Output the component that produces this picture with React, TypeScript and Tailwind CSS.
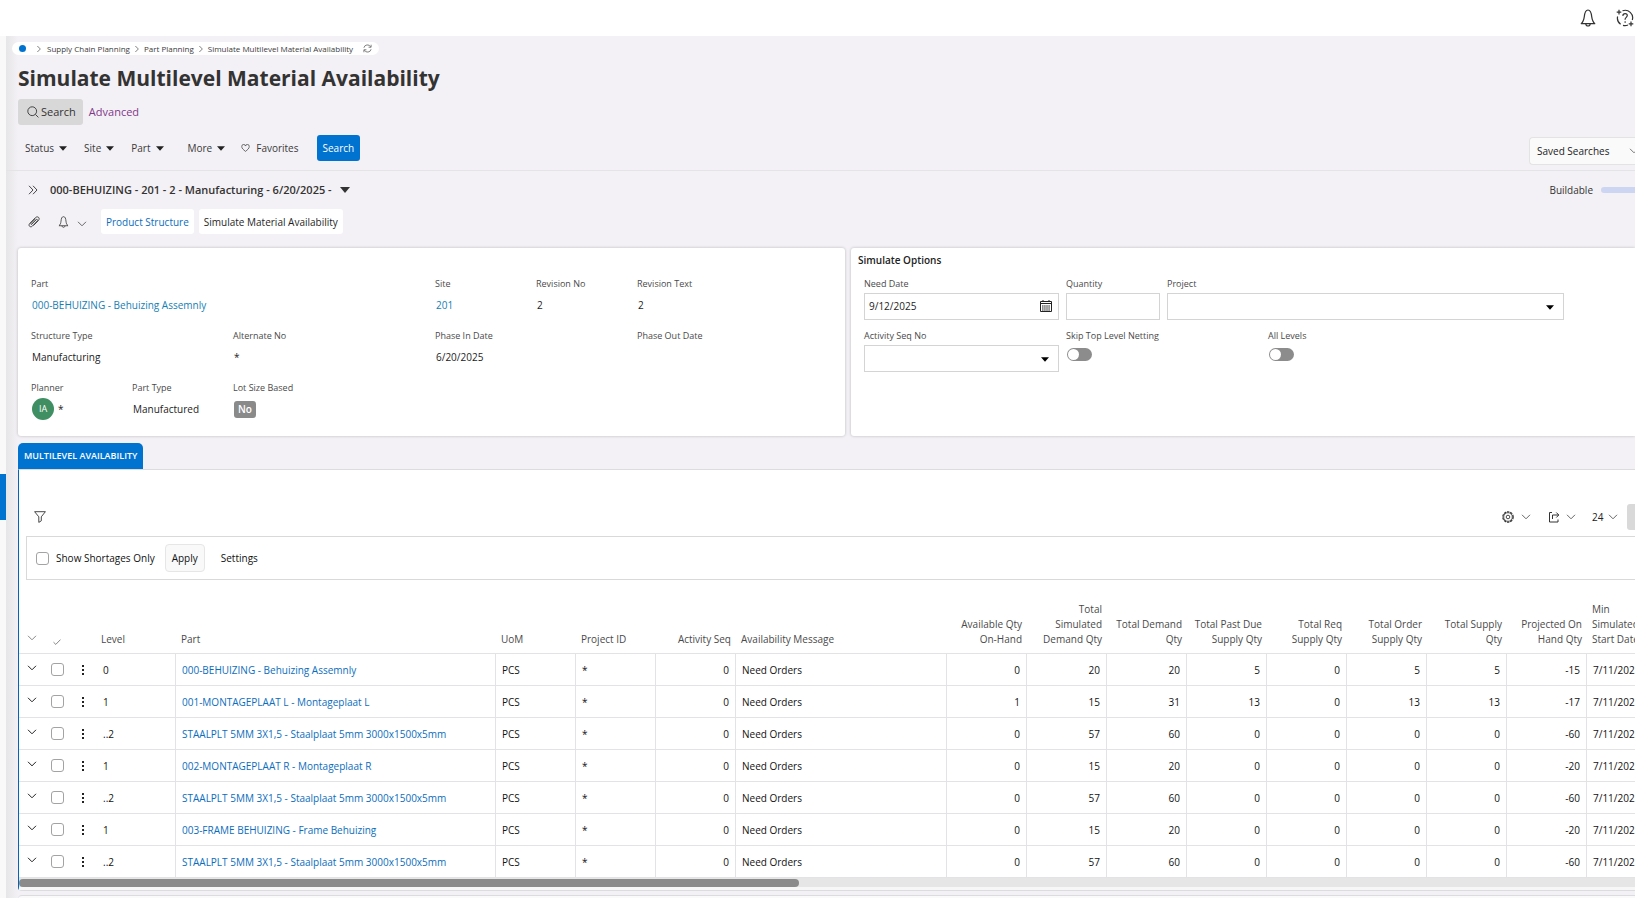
import React from 'react'
import clsx from 'clsx'

type IconProps = { className?: string }

const rows = [
  { level: '0', part: '000-BEHUIZING - Behuizing Assemnly', qty: [0, 20, 20, 5, 0, 5, 5, -15] },
  { level: '1', part: '001-MONTAGEPLAAT L - Montageplaat L', qty: [1, 15, 31, 13, 0, 13, 13, -17] },
  { level: '..2', part: 'STAALPLT 5MM 3X1,5 - Staalplaat 5mm 3000x1500x5mm', qty: [0, 57, 60, 0, 0, 0, 0, -60] },
  { level: '1', part: '002-MONTAGEPLAAT R - Montageplaat R', qty: [0, 15, 20, 0, 0, 0, 0, -20] },
  { level: '..2', part: 'STAALPLT 5MM 3X1,5 - Staalplaat 5mm 3000x1500x5mm', qty: [0, 57, 60, 0, 0, 0, 0, -60] },
  { level: '1', part: '003-FRAME BEHUIZING - Frame Behuizing', qty: [0, 15, 20, 0, 0, 0, 0, -20] },
  { level: '..2', part: 'STAALPLT 5MM 3X1,5 - Staalplaat 5mm 3000x1500x5mm', qty: [0, 57, 60, 0, 0, 0, 0, -60] },
]

const qtyHeaders = [
  'Available Qty\nOn-Hand',
  'Total\nSimulated\nDemand Qty',
  'Total Demand\nQty',
  'Total Past Due\nSupply Qty',
  'Total Req\nSupply Qty',
  'Total Order\nSupply Qty',
  'Total Supply\nQty',
  'Projected On\nHand Qty',
]

function Chevron({ className }: IconProps) {
  return (
    <svg viewBox="0 0 10 6" fill="none" stroke="currentColor" className={clsx('h-[6px] w-[10px] shrink-0', className)}>
      <path d="M1 .8 5 4.8 9 .8" />
    </svg>
  )
}

function Caret({ className }: IconProps) {
  return (
    <svg viewBox="0 0 8 5" fill="currentColor" className={clsx('h-[5px] w-2 shrink-0', className)}>
      <path d="M0 .3h8L4 4.8z" />
    </svg>
  )
}

function BellIcon({ className }: IconProps) {
  return (
    <svg viewBox="0 0 16 18" fill="none" stroke="currentColor" strokeWidth="1.2" strokeLinejoin="round" className={className}>
      <path d="M1.2 14.600c2.200-1.800 2.600-3.400 3.100-7C4.700 3.800 5.400 1 8 1s3.300 2.800 3.700 6.600c.5 3.600.9 5.200 3.100 7z" />
      <path d="M5.800 14.800c.2 1.500 1 2.200 2.200 2.200s2-.7 2.200-2.200" />
    </svg>
  )
}

function HelpIcon() {
  return (
    <svg viewBox="0 0 18 18" fill="none" stroke="currentColor" strokeWidth="1.2" className="h-[18px] w-[18px]">
      <path d="M6.500 1.800A7.500 7.500 0 0 1 16.300 11M12 16a7.500 7.500 0 0 1-5 .4M4.600 15.200A7.500 7.500 0 0 1 1.600 7.500" />
      <path d="M3 .8v4.600M.7 3.100h4.600M15 12.600v4.600M12.700 14.900h4.600" />
      <path d="M6.800 6.900c.1-1.500 1-2.300 2.300-2.300s2.200.8 2.200 2c0 1.700-2.200 1.800-2.200 3.700v.5" />
      <circle cx="9.100" cy="13" r=".5" fill="currentColor" strokeWidth=".5" />
    </svg>
  )
}

function RefreshIcon() {
  return (
    <svg viewBox="0 0 10 10" fill="none" stroke="#666" strokeWidth=".9" className="h-[9px] w-[9px]">
      <path d="M1 4.200A4 4 0 0 1 8.500 3.200M9 5.800A4 4 0 0 1 1.500 6.800" />
      <path d="M9 .8v2.800H6.200M1 9.200V6.400h2.800" />
    </svg>
  )
}

function SearchIcon() {
  return (
    <svg viewBox="0 0 12 12" fill="none" stroke="currentColor" strokeWidth=".9" className="h-3 w-3">
      <circle cx="5.200" cy="5.200" r="4.400" />
      <path d="m8.400 8.400 3 3" />
    </svg>
  )
}

function HeartIcon() {
  return (
    <svg viewBox="0 0 10 9" fill="none" stroke="currentColor" strokeWidth=".8" className="h-2 w-[9px]">
      <path d="M5 8.300C2.500 6.300.8 4.900.8 3A2.100 2.100 0 0 1 5 2.300 2.100 2.100 0 0 1 9.200 3C9.200 4.900 7.500 6.300 5 8.300z" />
    </svg>
  )
}

function ClipIcon() {
  return (
    <svg viewBox="0 0 12 12" fill="none" stroke="currentColor" strokeWidth="1" strokeLinecap="round" className="h-3 w-3">
      <path d="M3.300 8.600 8.200 3.700c.8-.8 2 .3 1.200 1.200l-5 5.200c-2 1.900-4.600-.5-2.700-2.600l5.800-5.900c2.300-2 4.900.5 3 2.800L5.800 9.200" />
      <path d="M2.700 7.700 7.300 3" />
    </svg>
  )
}

function CalendarIcon() {
  return (
    <svg viewBox="0 0 12 12" fill="none" stroke="#222" className="h-3 w-3">
      <path d="M.5 1.500h11v10H.5zM.5 3.500h11" />
      <path d="M3 0v2M9 0v2" />
      <path d="M2 6h8M2 8h8M2 10h8" strokeWidth="1.200" strokeDasharray="1.600 .5" />
    </svg>
  )
}

function FunnelIcon() {
  return (
    <svg viewBox="0 0 12 12" fill="none" stroke="#333" strokeWidth=".9" strokeLinejoin="round" className="h-3 w-3">
      <path d="M.6.7h10.800L7.300 5.800v4L4.800 11.400V5.800z" />
    </svg>
  )
}

function GearIcon() {
  return (
    <svg viewBox="0 0 12 12" fill="none" stroke="#333" className="h-3 w-3">
      <circle cx="6" cy="6" r="5.200" strokeWidth="1.200" strokeDasharray="2.400 .87" />
      <circle cx="6" cy="6" r="4.300" strokeWidth=".8" />
      <circle cx="6" cy="6" r="1.800" strokeWidth=".9" />
    </svg>
  )
}

function ShareIcon() {
  return (
    <svg viewBox="0 0 12 12" fill="none" stroke="#333" className="h-3 w-3">
      <path d="M4 1.500H1.500v9.500h8.500V8.500" />
      <path d="M4.500 8V4h6M8.300 1.500 10.800 4 8.300 6.500" />
    </svg>
  )
}

function Field({ label, className, children }: { label: string; className?: string; children?: React.ReactNode }) {
  return (
    <div className={clsx('flex h-11 flex-col', className)}>
      <span className="h-[17px] text-[9px] leading-4 whitespace-nowrap text-[#4a4a4a]">{label}</span>
      <div className="flex h-6 items-center gap-1 pl-px whitespace-nowrap">{children}</div>
    </div>
  )
}

function Control({ id, label, className, children }: { id: string; label: string; className?: string; children: React.ReactNode }) {
  return (
    <div className={clsx('flex h-11 flex-col items-start', className)}>
      <label htmlFor={id} className="h-[17px] text-[9px] leading-4 whitespace-nowrap text-[#4a4a4a]">{label}</label>
      {children}
    </div>
  )
}

function SelectBox({ id }: { id: string }) {
  return (
    <div className="relative w-full">
      <select id={id} className="block h-[27px] w-full appearance-none border border-[#d4d4d4] bg-white px-1">
        <option></option>
      </select>
      <Caret className="pointer-events-none absolute top-3 right-[10px] text-black" />
    </div>
  )
}

function Toggle({ id }: { id: string }) {
  return (
    <input
      id={id}
      type="checkbox"
      role="switch"
      className="mt-[3px] ml-px h-[13px] w-[25px] appearance-none rounded-full bg-[#8c8c8c] p-px before:block before:h-[11px] before:w-[11px] before:rounded-full before:bg-white checked:before:ml-3"
    />
  )
}

function CheckBox({ id, label }: { id?: string; label?: string }) {
  return (
    <input
      id={id}
      type="checkbox"
      aria-label={label}
      className="block h-[13px] w-[13px] shrink-0 appearance-none rounded-[3px] border border-[#a3a3a3] bg-white checked:bg-[#0073d1]"
    />
  )
}

function FilterButton({ children, className }: { children: React.ReactNode; className?: string }) {
  return (
    <button className={clsx('flex items-center gap-[5px]', className)}>
      {children}
      <Caret className="text-[#222]" />
    </button>
  )
}

function SearchHeader() {
  return (
    <header className="border-b border-[#e4e3e6] pb-[5px] pl-3">
      <nav aria-label="Breadcrumb" className="-ml-[6px] flex h-[13px] w-fit items-center rounded-full bg-white px-[7px] text-[8px] text-[#3c3c3c]">
        <span className="mr-2 h-[7px] w-[7px] rounded-full bg-[#0073d1]" />
        <Chevron className="-rotate-90 scale-75 text-[#555]" />
        <a href="#" className="ml-[3px]">Supply Chain Planning</a>
        <Chevron className="mx-[2px] -rotate-90 scale-75 text-[#555]" />
        <a href="#">Part Planning</a>
        <Chevron className="mx-[2px] -rotate-90 scale-75 text-[#555]" />
        <a href="#">Simulate Multilevel Material Availability</a>
        <button aria-label="Refresh" className="ml-[10px]"><RefreshIcon /></button>
      </nav>
      <h1 className="mt-[7px] text-[21px] leading-8 font-bold text-[#333]">Simulate Multilevel Material Availability</h1>
      <div className="mt-[5px] flex items-center gap-[6px] text-[11px]">
        <button className="flex h-[26px] items-center gap-[2px] rounded-[3px] bg-[#d9d8d9] pr-[7px] pl-[9px] text-[#333]">
          <SearchIcon />
          Search
        </button>
        <a href="#" className="text-[#81388b]">Advanced</a>
      </div>
      <div className="mt-[10px] flex h-[30px] items-start justify-between">
        <div className="flex h-[26px] items-center pl-[7px] text-[#3a3a3a]">
          <FilterButton className="mr-[17px]">Status</FilterButton>
          <FilterButton className="mr-[17px]">Site</FilterButton>
          <FilterButton className="mr-6">Part</FilterButton>
          <FilterButton className="mr-4">More</FilterButton>
          <button className="mr-[18px] flex items-center gap-[6px]">
            <HeartIcon />
            Favorites
          </button>
          <button className="h-[26px] rounded-[3px] bg-[#0073d1] px-[6px] font-medium text-white">Search</button>
        </div>
        <div className="relative w-[106px] self-end">
          <select aria-label="Saved Searches" className="block h-7 w-full appearance-none rounded-l-[4px] border border-r-0 border-[#e3e3e3] bg-[#fafafa] pl-[7px] text-[#222]">
            <option>Saved Searches</option>
          </select>
          <Chevron className="pointer-events-none absolute top-[11px] -right-1 text-[#777]" />
        </div>
      </div>
    </header>
  )
}

function RecordBar() {
  return (
    <div className="pl-3">
      <div className="flex h-[38px] items-center">
        <button aria-label="Expand list" className="ml-[10px]">
          <svg viewBox="0 0 10 10" fill="none" stroke="#333" strokeWidth=".9" className="h-[10px] w-[10px]">
            <path d="M1 .8 5 5 1 9.200M5 .8 9 5 5 9.200" />
          </svg>
        </button>
        <button className="ml-3 flex items-center gap-2 text-[11px] font-semibold text-[#333]">
          000-BEHUIZING - 201 - 2 - Manufacturing - 6/20/2025 -
          <svg viewBox="0 0 10 6" fill="currentColor" className="h-[6px] w-[10px]">
            <path d="M0 0h10L5 6z" />
          </svg>
        </button>
        <span className="ml-auto text-[#333]">Buildable</span>
        <div className="ml-2 h-[6px] w-[34px] rounded-l-full bg-[#ccd5f2]" />
      </div>
      <div className="flex h-[25px] items-center">
        <button aria-label="Attachments" className="ml-[10px] text-[#444]"><ClipIcon /></button>
        <button aria-label="Notifications" className="ml-[18px] flex items-center gap-2 text-[#333]">
          <BellIcon className="h-3 w-[11px]" />
          <Chevron className="mt-1 text-[#666]" />
        </button>
        <button className="ml-[14px] h-[25px] rounded-[3px] bg-white px-[5px] text-[#0b6dbd]">Product Structure</button>
        <button className="ml-[5px] h-[25px] rounded-[3px] bg-white px-[5px] text-[#1f1f1f]">Simulate Material Availability</button>
      </div>
    </div>
  )
}

function PartCard() {
  return (
    <section className="grid grid-cols-8 content-start gap-y-2 rounded-[3px] bg-white pt-7 pr-[6px] pl-[13px] text-[#1c1c1c] shadow-[0_0_3px_rgba(0,0,0,0.25)]">
      <Field label="Part" className="col-span-4">
        <a href="#" className="text-[#1580b3]">000-BEHUIZING - Behuizing Assemnly</a>
      </Field>
      <Field label="Site"><a href="#" className="text-[#1580b3]">201</a></Field>
      <Field label="Revision No">2</Field>
      <Field label="Revision Text" className="col-span-2">2</Field>
      <Field label="Structure Type" className="col-span-2">Manufacturing</Field>
      <Field label="Alternate No" className="col-span-2">*</Field>
      <Field label="Phase In Date" className="col-span-2">6/20/2025</Field>
      <Field label="Phase Out Date" className="col-span-2" />
      <Field label="Planner">
        <span className="flex h-[22px] w-[22px] items-center justify-center rounded-full bg-[#3f8f63] text-[9px] text-white">IA</span>
        *
      </Field>
      <Field label="Part Type">Manufactured</Field>
      <Field label="Lot Size Based">
        <span className="flex h-[17px] items-center rounded-[3px] bg-[#8a8a8a] px-1 font-semibold text-white">No</span>
      </Field>
    </section>
  )
}

function OptionsCard() {
  return (
    <section className="rounded-l-[3px] bg-white pt-1 pr-16 pb-4 pl-[13px] shadow-[0_0_3px_rgba(0,0,0,0.25)]">
      <h2 className="mb-2 -ml-[6px] leading-4 font-semibold text-[#222]">Simulate Options</h2>
      <div className="grid grid-cols-7 gap-y-2">
        <Control id="need-date" label="Need Date" className="col-span-2 pr-[7px]">
          <div className="relative w-full">
            <input id="need-date" defaultValue="9/12/2025" className="block h-[27px] w-full border border-[#d4d4d4] px-1 pb-[2px] text-[#1c1c1c]" />
            <button aria-label="Pick date" className="absolute top-[7px] right-[7px]"><CalendarIcon /></button>
          </div>
        </Control>
        <Control id="quantity" label="Quantity" className="pr-[7px]">
          <input id="quantity" className="block h-[27px] w-full border border-[#d4d4d4] px-1" />
        </Control>
        <Control id="project" label="Project" className="col-span-4 pr-[7px]">
          <SelectBox id="project" />
        </Control>
        <Control id="activity-seq" label="Activity Seq No" className="col-span-2 pr-[7px]">
          <SelectBox id="activity-seq" />
        </Control>
        <Control id="skip-netting" label="Skip Top Level Netting" className="col-span-2">
          <Toggle id="skip-netting" />
        </Control>
        <Control id="all-levels" label="All Levels">
          <Toggle id="all-levels" />
        </Control>
      </div>
    </section>
  )
}

function AvailabilityTable() {
  const head = 'px-[6px] pb-[6px] text-left align-bottom font-normal whitespace-pre-line'
  const cell = 'border-t border-l border-[#e3e3e5] px-[6px]'
  return (
    <table className="w-[1647px] table-fixed border-separate border-spacing-0">
      <colgroup>
        <col className="w-6" />
        <col className="w-7" />
        <col className="w-6" />
        <col className="w-20" />
        <col className="w-80" />
        <col className="w-20" />
        <col className="w-20" />
        <col className="w-20" />
        <col className="w-[211px]" />
        {qtyHeaders.map(h => <col key={h} className="w-20" />)}
        <col className="w-20" />
      </colgroup>
      <thead>
        <tr className="h-[73px] leading-[15px] text-[#4a4a4a]">
          <th className="pb-3 pl-2 align-bottom"><Chevron className="text-[#888]" /></th>
          <th className="pb-2 pl-[10px] align-bottom">
            <svg viewBox="0 0 8 6" fill="none" stroke="#777" strokeWidth=".9" className="h-[6px] w-2">
              <path d="M.5 3.200 2.800 5.400 7.500.6" />
            </svg>
          </th>
          <th></th>
          <th className={head}>Level</th>
          <th className={head}>Part</th>
          <th className={head}>UoM</th>
          <th className={head}>Project ID</th>
          <th className="pr-1 pb-[6px] text-right align-bottom font-normal">Activity Seq</th>
          <th className={head}>Availability Message</th>
          {qtyHeaders.map(h => (
            <th key={h} className="pr-1 pb-[6px] text-right align-bottom font-normal whitespace-pre-line">{h}</th>
          ))}
          <th className={head}>{'Min\nSimulated\nStart Date'}</th>
        </tr>
      </thead>
      <tbody className="text-[#111]">
        {rows.map((row, i) => (
          <tr key={i} className="h-8">
            <td className="border-t border-[#e3e3e5] pb-1 pl-2">
              <button aria-label="Expand row" className="block"><Chevron className="text-[#222]" /></button>
            </td>
            <td className="border-t border-[#e3e3e5] pl-2"><CheckBox label={'Select ' + row.part} /></td>
            <td className="border-t border-[#e3e3e5] pl-[10px]">
              <button aria-label="Row actions" className="block">
                <svg viewBox="0 0 4 10" fill="#222" className="h-[10px] w-1">
                  <path d="M1 0h2v2H1zM1 4h2v2H1zM1 8h2v2H1z" />
                </svg>
              </button>
            </td>
            <td className="border-t border-[#e3e3e5] pl-2">{row.level}</td>
            <td className={clsx(cell, 'whitespace-nowrap')}><a href="#" className="text-[#0b6dbd]">{row.part}</a></td>
            <td className={cell}>PCS</td>
            <td className={cell}>*</td>
            <td className={clsx(cell, 'text-right')}>0</td>
            <td className={cell}>Need Orders</td>
            {row.qty.map((q, j) => <td key={j} className={clsx(cell, 'text-right')}>{q}</td>)}
            <td className={cell}>7/11/2025</td>
          </tr>
        ))}
      </tbody>
    </table>
  )
}

function AvailabilityPanel() {
  return (
    <section className="mt-[7px]">
      <div role="tablist" className="flex">
        <button role="tab" aria-selected="true" className="h-[26px] rounded-t-[5px] bg-[#0073d1] px-[6px] text-[9px] font-semibold text-white">
          MULTILEVEL AVAILABILITY
        </button>
      </div>
      <div className="rounded-bl-[4px] border-y border-l border-y-[#dcdcde] border-l-[#0067b8] bg-white pt-[34px]">
        <div className="flex h-[26px] items-center pl-[15px]">
          <button aria-label="Filter"><FunnelIcon /></button>
          <div className="ml-auto flex items-center text-[#222]">
            <button aria-label="Table settings" className="mr-[17px] flex items-center gap-[7px]">
              <GearIcon />
              <Chevron className="text-[#666]" />
            </button>
            <button aria-label="Export" className="mr-4 flex items-center gap-[6px]">
              <ShareIcon />
              <Chevron className="text-[#666]" />
            </button>
            <div className="relative mr-[9px] w-[26px]">
              <select aria-label="Rows per page" className="block w-full appearance-none">
                <option>24</option>
              </select>
              <Chevron className="pointer-events-none absolute top-[5px] right-0 text-[#666]" />
            </div>
            <div className="h-[26px] w-2 rounded-l-[3px] bg-[#d9d9d9]" />
          </div>
        </div>
        <div className="mt-[6px] ml-[7px] flex h-11 items-center border-y border-l border-[#d9d9d9] pl-[9px] text-[#111]">
          <CheckBox id="shortages" />
          <label htmlFor="shortages" className="ml-[7px]">Show Shortages Only</label>
          <button className="ml-[10px] h-7 rounded-[4px] border border-[#e6e6e6] bg-[#f9f9f9] px-[6px]">Apply</button>
          <button className="ml-4">Settings</button>
        </div>
        <div className="overflow-hidden">
          <AvailabilityTable />
        </div>
        <div className="h-[10px] border-t border-[#e3e3e5] bg-[#e6e6e6] pt-px">
          <div className="h-2 w-[780px] rounded-full bg-[#8b8b8b]" />
        </div>
        <div className="h-[3px] bg-[#f7f7f7]" />
      </div>
    </section>
  )
}

export default function App() {
  return (
    <div className="flex h-screen flex-col overflow-hidden bg-white font-['Open_Sans',sans-serif] text-[10px] leading-4">
      <div className="flex h-9 shrink-0 items-center justify-end gap-5 pr-px pb-px text-[#333]">
        <button aria-label="Notifications"><BellIcon className="h-[18px] w-4" /></button>
        <button aria-label="Help"><HelpIcon /></button>
      </div>
      <div className="flex min-h-0 flex-1">
        <aside className="flex w-[6px] shrink-0 flex-col bg-[#f9f9fa] pt-[438px]">
          <button aria-label="Open navigator" className="h-[46px] bg-[#0073d1]" />
        </aside>
        <main className="min-w-0 flex-1 bg-[#f3f1f5] bg-linear-to-r from-[#e6e5e7] to-[#f3f1f5] to-[12px] pt-[6px]">
          <SearchHeader />
          <RecordBar />
          <div className="pl-3">
            <div className="mt-[14px] grid min-h-[188px] grid-cols-[827fr_784fr] gap-[6px]">
              <PartCard />
              <OptionsCard />
            </div>
            <AvailabilityPanel />
            <div className="mt-1 h-10 rounded-tl-[4px] border-t border-[#dcdcde] bg-[#fafafa]" />
          </div>
        </main>
      </div>
    </div>
  )
}
